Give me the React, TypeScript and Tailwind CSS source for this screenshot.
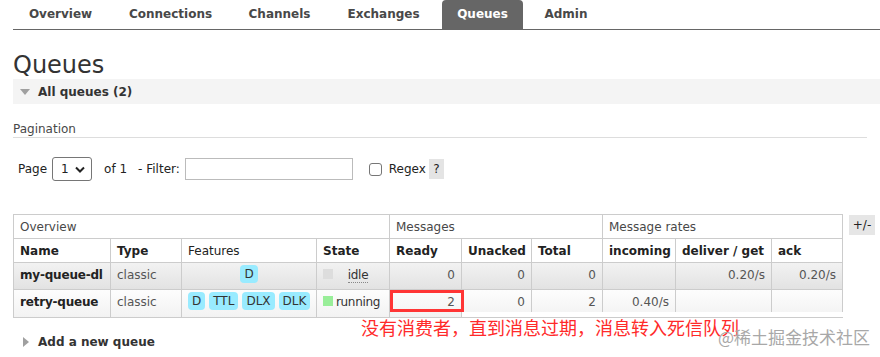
import React from "react";

const tabs = [
  { label: "Overview", w: "w-[93px]" },
  { label: "Connections", w: "w-[113px]" },
  { label: "Channels", w: "w-[91px]" },
  { label: "Exchanges", w: "w-[103px]" },
  { label: "Queues", w: "w-[81px]", active: true },
  { label: "Admin", w: "w-[72px]" },
];

function Badge({ children }: { children: React.ReactNode }) {
  return (
    <span className="inline-block h-[18px] rounded-[4px] bg-[#99ebff] px-[4px] leading-[18px] text-[#333]">
      {children}
    </span>
  );
}

function StateCell({ color, label, dotted }: { color: string; label: string; dotted?: boolean }) {
  return (
    <div className="flex items-start">
      <span className={`mt-[3px] h-[10px] w-[10px] shrink-0 ${color}`} />
      <span className="flex-1 text-center tracking-[-0.3px]">
        <span className={dotted ? "border-b border-dotted border-[#888]" : ""}>{label}</span>
      </span>
    </div>
  );
}

export default function App() {
  const cell = "overflow-visible whitespace-nowrap border border-[#ccc] px-[6px]";
  return (
    <div className="relative h-[357px] w-[880px] overflow-hidden bg-white font-['DejaVu_Sans',sans-serif] text-[12px] text-[#333]">
      {/* nav */}
      <div className="ml-[13px] border-b border-[#666]">
        <div className="ml-[1px] flex gap-[7px]">
          {tabs.map((t) => (
            <div
              key={t.label}
              className={`flex h-[29px] items-center justify-center pb-[2px] text-[12px] font-bold ${t.w} ${
                t.active ? "rounded-t-[4px] bg-[#666] text-white" : "text-[#484848]"
              }`}
            >
              {t.label}
            </div>
          ))}
        </div>
      </div>

      <h1 className="ml-[13px] mt-[21px] text-[24px] font-normal leading-[28px] text-[#333]">Queues</h1>

      <div className="ml-[13px] flex h-[25px] items-center bg-[#f4f4f4]">
        <svg width="10" height="6" viewBox="0 0 10 6" className="ml-[7px]">
          <path d="M0 0 L10 0 L5 6 Z" fill="#a0a0a0" />
        </svg>
        <span className="ml-[8px] text-[12px] font-bold text-[#333]">All queues (2)</span>
      </div>

      <div className="mx-[13px] border-b border-[#ddd] pt-[17px]">
        <div className="leading-[16px] text-[#484848]">Pagination</div>
      </div>

      <div className="ml-[18px] mt-[19px] flex h-[24px] items-center text-[#222]">
        <span>Page</span>
        <div className="ml-[5px] flex h-[24px] w-[40px] items-center rounded-[3px] border border-[#767676] pl-[8px]">
          <span>1</span>
          <svg width="10" height="7" viewBox="0 0 10 7" className="ml-[6px]">
            <path d="M1 1.5 L5 5.5 L9 1.5" fill="none" stroke="#222" strokeWidth="2" />
          </svg>
        </div>
        <span className="ml-[12px]">of 1</span>
        <span className="ml-[11px]">- Filter:</span>
        <div className="ml-[5px] h-[22px] w-[168px] border border-[#bbb]" />
        <div className="ml-[16px] h-[13px] w-[13px] rounded-[3px] border border-[#767676]" />
        <span className="ml-[7px]">Regex</span>
        <span className="ml-[3px] flex h-[20px] w-[15px] items-center justify-center bg-[#e4e4e4]">?</span>
      </div>

      <div className="ml-[13px] mt-[33px] flex items-start">
        <table className="w-[829px] table-fixed border-collapse">
          <colgroup>
            <col className="w-[97px]" />
            <col className="w-[71px]" />
            <col className="w-[135px]" />
            <col className="w-[73px]" />
            <col className="w-[72px]" />
            <col className="w-[70px]" />
            <col className="w-[71px]" />
            <col className="w-[73px]" />
            <col className="w-[96px]" />
            <col className="w-[71px]" />
          </colgroup>
          <thead>
            <tr className="h-[24px] text-left">
              <th colSpan={4} className={`${cell} font-normal text-[#484848]`}>Overview</th>
              <th colSpan={3} className={`${cell} font-normal text-[#484848]`}>Messages</th>
              <th colSpan={3} className={`${cell} font-normal text-[#484848]`}>Message rates</th>
            </tr>
            <tr className="h-[24px] text-left text-[#222]">
              <th className={cell}>Name</th>
              <th className={cell}>Type</th>
              <th className={`${cell} font-normal`}>Features</th>
              <th className={cell}>State</th>
              <th className={cell}>Ready</th>
              <th className={cell}>Unacked</th>
              <th className={cell}>Total</th>
              <th className={cell}>incoming</th>
              <th className={cell}>deliver / get</th>
              <th className={cell}>ack</th>
            </tr>
          </thead>
          <tbody>
            <tr className="h-[27px] bg-gradient-to-b from-[#f2f2f2] to-[#e2e2e2] align-top">
              <td className={`${cell} pt-[3px] font-bold tracking-[-0.2px] text-[#222]`}>my-queue-dl</td>
              <td className={`${cell} pt-[3px] text-[#555]`}>classic</td>
              <td className={`${cell} pt-[2px] text-center`}>
                <Badge>D</Badge>
              </td>
              <td className={`${cell} pt-[3px]`}>
                <StateCell color="bg-[#dddddd]" label="idle" dotted />
              </td>
              <td className={`${cell} pt-[3px] text-right text-[#555]`}>0</td>
              <td className={`${cell} pt-[3px] text-right text-[#555]`}>0</td>
              <td className={`${cell} pt-[3px] text-right text-[#555]`}>0</td>
              <td className={cell}></td>
              <td className={`${cell} pt-[3px] text-right text-[#555]`}>0.20/s</td>
              <td className={`${cell} pt-[3px] text-right text-[#555]`}>0.20/s</td>
            </tr>
            <tr className="h-[28px] bg-gradient-to-b from-[#fdfdfd] to-[#f2f2f2] align-top">
              <td className={`${cell} pt-[3px] font-bold tracking-[-0.2px] text-[#222]`}>retry-queue</td>
              <td className={`${cell} pt-[3px] text-[#555]`}>classic</td>
              <td className={`${cell} pt-[2px] text-center`}>
                <span className="inline-flex gap-[4px]">
                  <Badge>D</Badge>
                  <Badge>TTL</Badge>
                  <Badge>DLX</Badge>
                  <Badge>DLK</Badge>
                </span>
              </td>
              <td className={`${cell} pt-[3px]`}>
                <StateCell color="bg-[#99ee99]" label="running" />
              </td>
              <td className={`${cell} relative pt-[3px] text-right text-[#555]`}>
                2
                <span className="absolute left-[0px] top-[0px] h-[22px] w-[74px] border-[3px] border-[#ff3535]" />
              </td>
              <td className={`${cell} pt-[3px] text-right text-[#555]`}>0</td>
              <td className={`${cell} pt-[3px] text-right text-[#555]`}>2</td>
              <td className={`${cell} pt-[3px] text-right text-[#555]`}>0.40/s</td>
              <td className={cell}></td>
              <td className={cell}></td>
            </tr>
          </tbody>
        </table>
        <span className="ml-[6px] mt-[1px] flex h-[20px] w-[26px] items-center justify-center bg-[#e6e6e6] text-[#222]">
          +/-
        </span>
      </div>

      <div className="ml-[23px] mt-[15px] flex items-center">
        <svg width="6" height="10" viewBox="0 0 6 10">
          <path d="M0 0 L6 5 L0 10 Z" fill="#a0a0a0" />
        </svg>
        <span className="ml-[9px] text-[12px] font-bold text-[#333]">Add a new queue</span>
      </div>

      {/* screenshot annotation */}
      <div className="absolute left-[462px] top-[312px] h-[5px] w-[418px] bg-white" />
      <div className="absolute left-[361px] top-[315px] font-['Noto_Sans_CJK_SC',sans-serif] text-[18px] leading-[24px] text-[#ff2a2a]">
        没有消费者，直到消息过期，消息转入死信队列
      </div>
      <div className="absolute left-[718px] top-[326px] font-['Noto_Sans_CJK_SC',sans-serif] text-[17px] leading-[22px] text-[#a8a8a8]">
        @稀土掘金技术社区
      </div>
    </div>
  );
}
